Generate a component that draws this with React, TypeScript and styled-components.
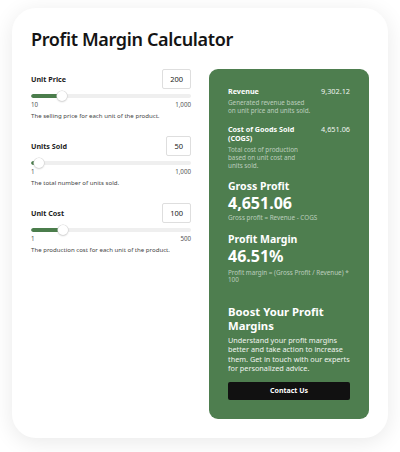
import * as React from "react";
import styled, { createGlobalStyle } from "styled-components";

const GlobalStyle = createGlobalStyle`
  html, body {
    margin: 0;
    padding: 0;
    background: #ffffff;
  }
  body {
    font-family: "Noto Sans", "Open Sans", sans-serif;
    color: #1a1a1a;
  }
`;

const Page = styled.div`
  padding: 8px 12px 15px 12px;
`;

const Card = styled.div`
  background: #fff;
  border-radius: 24px;
  box-shadow: 0 4px 22px rgba(0, 0, 0, 0.09);
  padding: 19px;
`;

const Title = styled.h1`
  margin: 0;
  font-size: 18px;
  line-height: 24px;
  font-weight: 600;
  letter-spacing: -0.35px;
  color: #141414;
`;

const Columns = styled.div`
  display: grid;
  grid-template-columns: 1fr 1fr;
  gap: 18px;
  margin-top: 18px;
`;

const Inputs = styled.div`
  display: flex;
  flex-direction: column;
  gap: 16px;
`;

const Field = styled.div`
  display: flex;
  flex-direction: column;
`;

const FieldHead = styled.div`
  display: flex;
  align-items: center;
  justify-content: space-between;
  height: 20px;
`;

const Label = styled.div`
  font-size: 7.2px;
  font-weight: 700;
  color: #1d1d1d;
`;

const NumberBox = styled.div`
  height: 20px;
  box-sizing: border-box;
  padding: 0 7px;
  border: 1px solid #dedede;
  border-radius: 2px;
  display: flex;
  align-items: center;
  font-size: 7.5px;
  color: #222;
`;

const Track = styled.div`
  position: relative;
  margin-top: 2px;
  height: 10px;
  display: flex;
  align-items: center;
`;

const Rail = styled.div`
  width: 100%;
  height: 3.5px;
  border-radius: 2px;
  background: #efefef;
  overflow: hidden;
`;

const Fill = styled.div`
  height: 100%;
  background: #4b7d4c;
  border-radius: 2px;
`;

const Thumb = styled.div`
  position: absolute;
  top: 0;
  width: 10px;
  height: 10px;
  margin-left: -5px;
  border-radius: 50%;
  background: #fff;
  box-shadow: 0 0 0 0.6px #d6d6d6, 0 1px 2px rgba(0, 0, 0, 0.18);
`;

const Bounds = styled.div`
  display: flex;
  justify-content: space-between;
  font-size: 6.2px;
  line-height: 8px;
  color: #555;
`;

const Hint = styled.div`
  margin-top: 3px;
  font-size: 6.1px;
  line-height: 8px;
  color: #444;
`;

const Panel = styled.div`
  background: #4e7e4f;
  border-radius: 9px;
  padding: 18px 19px 19px 19px;
  color: #fff;
  display: flex;
  flex-direction: column;
`;

const StatRow = styled.div<{ $gap?: number }>`
  display: flex;
  justify-content: space-between;
  margin-top: ${(p) => p.$gap ?? 0}px;
`;

const StatText = styled.div<{ $width: number }>`
  width: ${(p) => p.$width}px;
`;

const StatLabel = styled.div`
  font-size: 7.2px;
  line-height: 9px;
  font-weight: 700;
`;

const StatValue = styled.div`
  font-size: 7.3px;
  line-height: 9px;
  color: #f1f5f1;
`;

const Muted = styled.div<{ $top?: number; $line?: number }>`
  margin-top: ${(p) => p.$top ?? 3}px;
  font-size: 6.3px;
  line-height: ${(p) => p.$line ?? 8}px;
  color: rgba(255, 255, 255, 0.62);
`;

const BigLabel = styled.div<{ $top: number }>`
  margin-top: ${(p) => p.$top}px;
  font-size: 10.5px;
  line-height: 13px;
  font-weight: 700;
`;

const BigValue = styled.div`
  margin-top: 1px;
  font-size: 16px;
  line-height: 18px;
  font-weight: 700;
`;

const BoostTitle = styled.div`
  margin-top: 21px;
  font-size: 11.3px;
  line-height: 14px;
  font-weight: 700;
`;

const BoostText = styled.div`
  margin-top: 3px;
  font-size: 7.3px;
  line-height: 9.5px;
  color: #eef3ee;
`;

const ContactButton = styled.button`
  margin-top: 8px;
  height: 18px;
  width: 100%;
  border: none;
  border-radius: 2px;
  background: #111111;
  color: #fff;
  font-family: inherit;
  font-size: 7px;
  font-weight: 700;
  cursor: pointer;
`;

type SliderFieldProps = {
  label: string;
  value: number;
  min: number;
  max: number;
  hint: string;
};

const fmt = (n: number) => n.toLocaleString("en-US");

const SliderField: React.FC<SliderFieldProps> = ({ label, value, min, max, hint }) => {
  const pct = ((value - min) / (max - min)) * 100;
  return (
    <Field>
      <FieldHead>
        <Label>{label}</Label>
        <NumberBox>{value}</NumberBox>
      </FieldHead>
      <Track>
        <Rail>
          <Fill style={{ width: `${pct}%` }} />
        </Rail>
        <Thumb style={{ left: `${pct}%` }} />
      </Track>
      <Bounds>
        <span>{fmt(min)}</span>
        <span>{fmt(max)}</span>
      </Bounds>
      <Hint>{hint}</Hint>
    </Field>
  );
};

export default function App() {
  return (
    <Page>
      <GlobalStyle />
      <Card>
        <Title>Profit Margin Calculator</Title>
        <Columns>
          <Inputs>
            <SliderField
              label="Unit Price"
              value={200}
              min={10}
              max={1000}
              hint="The selling price for each unit of the product."
            />
            <SliderField
              label="Units Sold"
              value={50}
              min={1}
              max={1000}
              hint="The total number of units sold."
            />
            <SliderField
              label="Unit Cost"
              value={100}
              min={1}
              max={500}
              hint="The production cost for each unit of the product."
            />
          </Inputs>
          <Panel>
            <StatRow>
              <StatText $width={84}>
                <StatLabel>Revenue</StatLabel>
                <Muted>Generated revenue based on unit price and units sold.</Muted>
              </StatText>
              <StatValue>9,302.12</StatValue>
            </StatRow>
            <StatRow $gap={10}>
              <StatText $width={80}>
                <StatLabel>Cost of Goods Sold (COGS)</StatLabel>
                <Muted>Total cost of production based on unit cost and units sold.</Muted>
              </StatText>
              <StatValue>4,651.06</StatValue>
            </StatRow>
            <BigLabel $top={9.5}>Gross Profit</BigLabel>
            <BigValue>4,651.06</BigValue>
            <Muted $top={2.5}>Gross profit = Revenue - COGS</Muted>
            <BigLabel $top={10.5}>Profit Margin</BigLabel>
            <BigValue>46.51%</BigValue>
            <Muted $top={4} $line={7.5}>
              Profit margin = (Gross Profit / Revenue) * 100
            </Muted>
            <BoostTitle>
              Boost Your Profit
              <br />
              Margins
            </BoostTitle>
            <BoostText>
              Understand your profit margins better and take action to increase
              them. Get in touch with our experts for personalized advice.
            </BoostText>
            <ContactButton>Contact Us</ContactButton>
          </Panel>
        </Columns>
      </Card>
    </Page>
  );
}
